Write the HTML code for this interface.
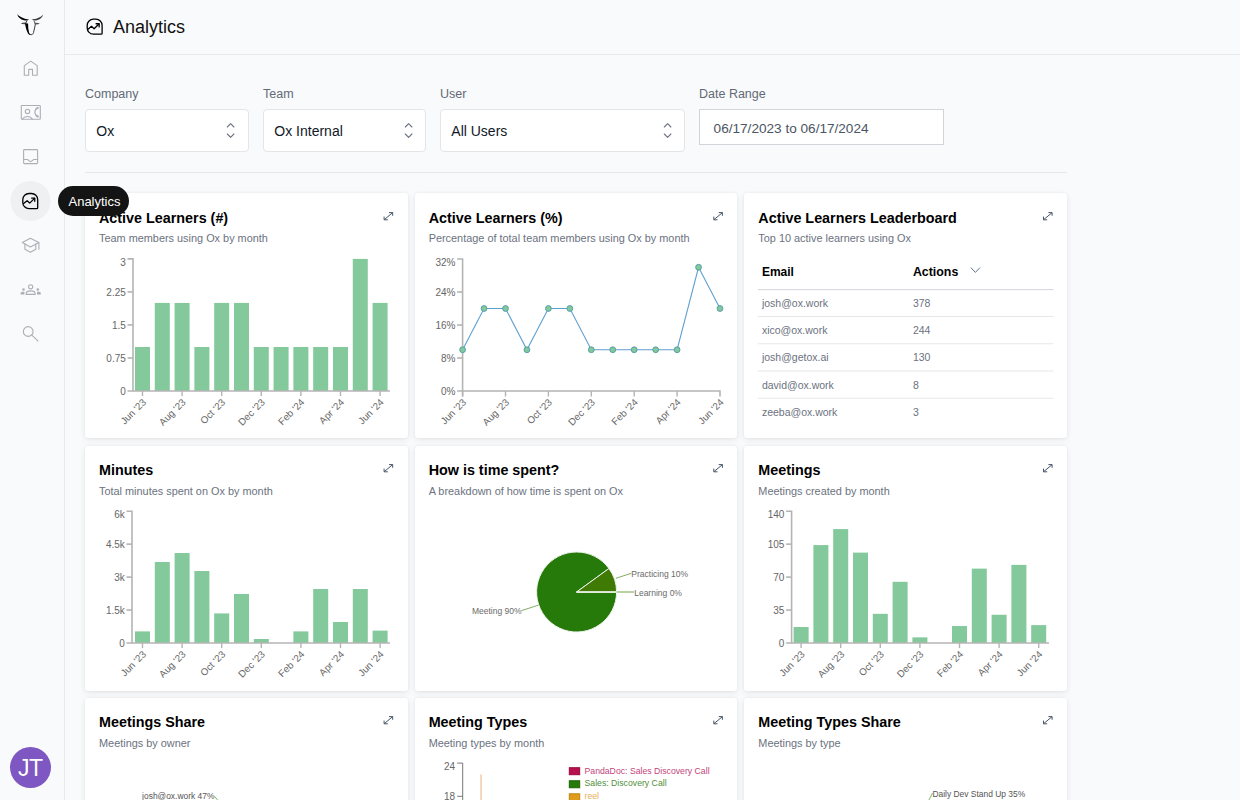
<!DOCTYPE html>
<html><head><meta charset="utf-8">
<style>
*{box-sizing:border-box;margin:0;padding:0}
html,body{width:1240px;height:800px;overflow:hidden;background:#f9fafb;font-family:"Liberation Sans",sans-serif;color:#111827}
.abs{position:absolute}
#sidebar{position:absolute;left:0;top:0;width:65px;height:800px;border-right:1px solid #e8e9ec;background:#f9fafb}
#header{position:absolute;left:65px;top:0;width:1175px;height:55px;border-bottom:1px solid #e8e9ec}
.lbl{position:absolute;top:86.5px;font-size:12.5px;color:#626a77;line-height:14px}
.sel{position:absolute;top:109px;height:43px;background:#fff;border:1px solid #e3e5e8;border-radius:4px;font-size:14px;color:#111827}
.sel span{position:absolute;left:10.3px;top:13px;line-height:16px}
.sel svg{position:absolute;right:12px;top:13px}
.card{position:absolute;width:322.67px;height:245.2px;background:#fff;border-radius:3px;box-shadow:0 2px 6px rgba(0,0,0,.07),0 0 3px rgba(0,0,0,.06)}
.card h3{position:absolute;left:14px;top:16.3px;font-size:14.35px;font-weight:bold;color:#000;line-height:16px;white-space:nowrap}
.card p{position:absolute;left:14px;top:39px;font-size:10.9px;color:#6b7280;line-height:13px;white-space:nowrap}
.card .ex{position:absolute;right:13px;top:16px}
</style></head>
<body>
<div id="sidebar">
<svg width="64" height="800" style="position:absolute;left:0;top:0" fill="none">
 <!-- bull logo -->
 <g fill="#000">
  <path d="M17.2 14.0 C17.9 17.4 21.2 20.1 25.4 20.5 C26.8 20.6 28.1 20.3 29 19.6 C27 19.4 24.6 19.0 22.6 17.8 C20.2 16.8 18.3 15.6 17.2 14.0 Z"/>
  <path d="M43.1 14.5 C42.5 17.6 39.6 20 35.6 20.4 C34.1 20.5 32.4 20.2 31.4 19.6 C33.5 19.3 35.9 19 37.9 18 C40.4 17 42.2 15.9 43.1 14.5 Z" fill="#3c3c3c"/>
  <path d="M20.8 23.6 C22.4 22.6 24.4 22.3 26.2 22.8 L26.2 24.2 C24.3 24.5 22.4 24.4 20.8 23.6 Z" fill="#4a4a4a"/>
  <path d="M39.9 23.7 C38.3 22.8 36.3 22.5 34.5 22.9 L34.3 24.3 C36.3 24.6 38.3 24.4 39.9 23.7 Z" fill="#555"/>
  <path d="M26.6 20.4 L25.4 22.6 L26.3 23 L27.6 20.5 Z" fill="#333"/>
  <path d="M34.2 20.5 L35.4 22.8 L34.5 23.1 L33.3 20.5 Z" fill="#444"/>
  <path d="M25.0 23.3 C25.6 27.5 26.6 31 28 33.4 C28.8 34.7 30 35.1 31 35.1 L30.7 34.2 C29.8 34 29.3 33.3 29 32.3 C28.3 29.6 28 26.6 28.1 23.6 Z"/>
  <path d="M30.8 34.65 C32.4 34.7 33.2 34 33.5 32.7 L35.4 24.2" fill="none" stroke="#333" stroke-width="0.95"/>
 </g>
 <g stroke="#abafb6" stroke-width="1.1" stroke-linejoin="round" stroke-linecap="round">
  <!-- home -->
  <path d="M24.3 75.3 V65.6 L30.75 61.1 L37.2 65.6 V75.3 H32.5 V69.4 H28.7 V75.3 Z"/>
  <!-- contact -->
  <rect x="21.3" y="105.5" width="19" height="13.8" rx="0.6"/>
  <circle cx="27.5" cy="111.4" r="2.2"/>
  <path d="M22.4 119.2 C23.6 117.4 25.4 116.5 27.5 116.5 C29.6 116.5 31.4 117.4 32.4 119.2"/>
  <path d="M37.3 108.3 C35.6 109.4 34.8 110.8 34.8 112.2 C34.8 113.6 35.6 115 37.3 116" stroke-width="1.2"/><path d="M36.4 108.6 L38 107.8" stroke-width="1.8"/><path d="M36.4 115.8 L38 116.6" stroke-width="1.8"/>
  <!-- inbox -->
  <rect x="23.6" y="149.6" width="14" height="14" rx="0.8"/>
  <path d="M23.6 159.5 H27.4 C28.4 159.5 29 161.5 30.6 161.5 C32.2 161.5 32.8 159.5 33.8 159.5 H37.6"/>
  <!-- grad cap -->
  <path d="M22.3 242.6 L30.4 238.3 L38.8 242.6 L30.4 247 Z"/>
  <path d="M24.9 244 V249.2 L30.4 252.2 L35.8 249.2 V244"/>
  <path d="M38.9 242.8 V249.2"/>
  <!-- search -->
  <circle cx="28.2" cy="331.5" r="4.9"/>
  <path d="M31.8 335.2 L37.9 340.8"/>
  <!-- team -->
  <circle cx="30.65" cy="286.8" r="2.1"/>
  <path d="M26.2 294.4 V293.6 C26.2 291.9 28.2 290.9 30.65 290.9 C33.1 290.9 35.1 291.9 35.1 293.6 V294.4 Z"/>
 </g>
 <g fill="#abafb6">
  <circle cx="23.5" cy="289.5" r="1.3"/>
  <circle cx="37.8" cy="289.5" r="1.3"/>
  <path d="M20.6 294.6 V293.4 C20.6 292.2 21.8 291.8 23.6 291.8 C24 291.8 24.2 291.8 24.4 291.9 V294.6 Z"/>
  <path d="M40.8 294.6 V293.4 C40.8 292.2 39.6 291.8 37.8 291.8 C37.4 291.8 37.2 291.8 37 291.9 V294.6 Z"/>
 </g>
 <!-- active analytics -->
 <circle cx="30.5" cy="201" r="20" fill="#eff0f2"/>
 <g stroke="#000" stroke-width="1.3" stroke-linejoin="round" stroke-linecap="round" transform="translate(21.6,192.4)">
  <path d="M1.2 7.3 A6.2 6.2 0 0 1 7.4 1.1 H9.9 A6.2 6.2 0 0 1 16.1 7.3 V15.3 Q16.1 16.2 15.2 16.2 H7.4 A6.2 6.2 0 0 1 1.2 10 Z"/>
  <path d="M2 11.2 L5.5 8.35 L8.1 10.7 L12.9 6"/>
  <path d="M10.1 5.75 H13.15 V8.9"/>
 </g>
</svg>
<div style="position:absolute;left:10.1px;top:747.1px;width:41px;height:41px;border-radius:50%;background:#7e57c2;color:#fff;font-size:23px;letter-spacing:-0.6px;text-indent:-0.6px;line-height:42.3px;text-align:center">JT</div>
</div>
<div style="position:absolute;left:58px;top:186px;width:71px;height:30px;border-radius:15px;background:#141414;color:#fff;font-size:13px;line-height:30px;text-align:center;z-index:10"><span style="position:relative;left:1px;top:1.3px">Analytics</span></div>
<div id="header">
  <svg width="20" height="20" style="position:absolute;left:21px;top:17.9px;overflow:visible" fill="none"><g stroke="#000" stroke-width="1.3" stroke-linejoin="round" stroke-linecap="round">
  <path d="M1.2 7.3 A6.2 6.2 0 0 1 7.4 1.1 H9.9 A6.2 6.2 0 0 1 16.1 7.3 V15.3 Q16.1 16.2 15.2 16.2 H7.4 A6.2 6.2 0 0 1 1.2 10 Z"/>
  <path d="M2 11.2 L5.5 8.35 L8.1 10.7 L12.9 6"/>
  <path d="M10.1 5.75 H13.15 V8.9"/></g></svg>
  <div class="abs" style="left:48px;top:17px;font-size:18px;line-height:20px;color:#111">Analytics</div>
</div>

<div class="lbl" style="left:85px">Company</div>
<div class="lbl" style="left:263px">Team</div>
<div class="lbl" style="left:440px">User</div>
<div class="lbl" style="left:699px">Date Range</div>

<div class="sel" style="left:85px;width:164px"><span>Ox</span></div>
<div class="sel" style="left:263px;width:163px"><span>Ox Internal</span></div>
<div class="sel" style="left:440px;width:245px"><span>All Users</span></div>
<div class="abs" style="left:699px;top:109px;width:245px;height:36px;background:#fff;border:1px solid #d1d5db;font-size:13.6px;color:#4b5563"><span class="abs" style="left:13.6px;top:10.5px;line-height:15px">06/17/2023 to 06/17/2024</span></div>

<div class="abs" style="left:85px;top:172px;width:982px;height:1px;background:#e5e7eb"></div>

<div class="card" style="left:85px;top:193.3px"><h3>Active Learners (#)</h3><p>Team members using Ox by month</p></div>
<div class="card" style="left:414.67px;top:193.3px"><h3>Active Learners (%)</h3><p>Percentage of total team members using Ox by month</p></div>
<div class="card" style="left:744.33px;top:193.3px"><h3>Active Learners Leaderboard</h3><p>Top 10 active learners using Ox</p></div>
<div class="card" style="left:85px;top:445.5px"><h3>Minutes</h3><p>Total minutes spent on Ox by month</p></div>
<div class="card" style="left:414.67px;top:445.5px"><h3>How is time spent?</h3><p>A breakdown of how time is spent on Ox</p></div>
<div class="card" style="left:744.33px;top:445.5px"><h3>Meetings</h3><p>Meetings created by month</p></div>
<div class="card" style="left:85px;top:697.7px"><h3>Meetings Share</h3><p>Meetings by owner</p></div>
<div class="card" style="left:414.67px;top:697.7px"><h3>Meeting Types</h3><p>Meeting types by month</p></div>
<div class="card" style="left:744.33px;top:697.7px"><h3>Meeting Types Share</h3><p>Meetings by type</p></div>

<svg width="1240" height="800" style="position:absolute;left:0;top:0;z-index:5;pointer-events:none" font-family="Liberation Sans, sans-serif">
<rect x="134.98" y="346.97" width="15.00" height="44.03" fill="#84c99b"/>
<rect x="154.78" y="302.93" width="15.00" height="88.07" fill="#84c99b"/>
<rect x="174.58" y="302.93" width="15.00" height="88.07" fill="#84c99b"/>
<rect x="194.38" y="346.97" width="15.00" height="44.03" fill="#84c99b"/>
<rect x="214.18" y="302.93" width="15.00" height="88.07" fill="#84c99b"/>
<rect x="233.98" y="302.93" width="15.00" height="88.07" fill="#84c99b"/>
<rect x="253.78" y="346.97" width="15.00" height="44.03" fill="#84c99b"/>
<rect x="273.58" y="346.97" width="15.00" height="44.03" fill="#84c99b"/>
<rect x="293.38" y="346.97" width="15.00" height="44.03" fill="#84c99b"/>
<rect x="313.18" y="346.97" width="15.00" height="44.03" fill="#84c99b"/>
<rect x="332.98" y="346.97" width="15.00" height="44.03" fill="#84c99b"/>
<rect x="352.78" y="258.90" width="15.00" height="132.10" fill="#84c99b"/>
<rect x="372.58" y="302.93" width="15.00" height="88.07" fill="#84c99b"/>
<path d="M127.50,258.90 H133.00 V391.00 H127.50" stroke="#b4b4b4" stroke-width="1.6" fill="none"/>
<path d="M127.50,357.98 H133.00" stroke="#b4b4b4" stroke-width="1.6"/>
<path d="M127.50,324.95 H133.00" stroke="#b4b4b4" stroke-width="1.6"/>
<path d="M127.50,291.92 H133.00" stroke="#b4b4b4" stroke-width="1.6"/>
<text x="125.80" y="395.20" text-anchor="end" font-size="10" fill="#666666">0</text>
<text x="125.80" y="362.18" text-anchor="end" font-size="10" fill="#666666">0.75</text>
<text x="125.80" y="329.15" text-anchor="end" font-size="10" fill="#666666">1.5</text>
<text x="125.80" y="296.12" text-anchor="end" font-size="10" fill="#666666">2.25</text>
<text x="125.80" y="266.10" text-anchor="end" font-size="10" fill="#666666">3</text>
<path d="M133.00,391.00 H390.00" stroke="#b4b4b4" stroke-width="1.6" fill="none"/>
<path d="M142.48,391.00 V396.00" stroke="#b4b4b4" stroke-width="1.4"/>
<path d="M182.08,391.00 V396.00" stroke="#b4b4b4" stroke-width="1.4"/>
<path d="M221.68,391.00 V396.00" stroke="#b4b4b4" stroke-width="1.4"/>
<path d="M261.28,391.00 V396.00" stroke="#b4b4b4" stroke-width="1.4"/>
<path d="M300.88,391.00 V396.00" stroke="#b4b4b4" stroke-width="1.4"/>
<path d="M340.48,391.00 V396.00" stroke="#b4b4b4" stroke-width="1.4"/>
<path d="M380.08,391.00 V396.00" stroke="#b4b4b4" stroke-width="1.4"/>
<text transform="translate(146.78,402.90) rotate(-45)" text-anchor="end" font-size="9.8" fill="#666666">Jun '23</text>
<text transform="translate(186.38,402.90) rotate(-45)" text-anchor="end" font-size="9.8" fill="#666666">Aug '23</text>
<text transform="translate(225.98,402.90) rotate(-45)" text-anchor="end" font-size="9.8" fill="#666666">Oct '23</text>
<text transform="translate(265.58,402.90) rotate(-45)" text-anchor="end" font-size="9.8" fill="#666666">Dec '23</text>
<text transform="translate(305.18,402.90) rotate(-45)" text-anchor="end" font-size="9.8" fill="#666666">Feb '24</text>
<text transform="translate(344.78,402.90) rotate(-45)" text-anchor="end" font-size="9.8" fill="#666666">Apr '24</text>
<text transform="translate(384.38,402.90) rotate(-45)" text-anchor="end" font-size="9.8" fill="#666666">Jun '24</text>
<rect x="135.00" y="631.40" width="15.00" height="11.60" fill="#84c99b"/>
<rect x="154.80" y="562.01" width="15.00" height="80.99" fill="#84c99b"/>
<rect x="174.60" y="553.02" width="15.00" height="89.98" fill="#84c99b"/>
<rect x="194.40" y="570.99" width="15.00" height="72.01" fill="#84c99b"/>
<rect x="214.20" y="613.41" width="15.00" height="29.59" fill="#84c99b"/>
<rect x="234.00" y="594.01" width="15.00" height="48.99" fill="#84c99b"/>
<rect x="253.80" y="639.00" width="15.00" height="4.00" fill="#84c99b"/>
<rect x="293.40" y="631.40" width="15.00" height="11.60" fill="#84c99b"/>
<rect x="313.20" y="589.01" width="15.00" height="53.99" fill="#84c99b"/>
<rect x="333.00" y="622.00" width="15.00" height="21.00" fill="#84c99b"/>
<rect x="352.80" y="589.01" width="15.00" height="53.99" fill="#84c99b"/>
<rect x="372.60" y="630.61" width="15.00" height="12.39" fill="#84c99b"/>
<path d="M126.50,511.20 H132.00 V643.00 H126.50" stroke="#b4b4b4" stroke-width="1.6" fill="none"/>
<path d="M126.50,610.05 H132.00" stroke="#b4b4b4" stroke-width="1.6"/>
<path d="M126.50,577.10 H132.00" stroke="#b4b4b4" stroke-width="1.6"/>
<path d="M126.50,544.15 H132.00" stroke="#b4b4b4" stroke-width="1.6"/>
<text x="124.80" y="647.20" text-anchor="end" font-size="10" fill="#666666">0</text>
<text x="124.80" y="614.25" text-anchor="end" font-size="10" fill="#666666">1.5k</text>
<text x="124.80" y="581.30" text-anchor="end" font-size="10" fill="#666666">3k</text>
<text x="124.80" y="548.35" text-anchor="end" font-size="10" fill="#666666">4.5k</text>
<text x="124.80" y="518.40" text-anchor="end" font-size="10" fill="#666666">6k</text>
<path d="M132.00,643.00 H390.00" stroke="#b4b4b4" stroke-width="1.6" fill="none"/>
<path d="M142.50,643.00 V648.00" stroke="#b4b4b4" stroke-width="1.4"/>
<path d="M182.10,643.00 V648.00" stroke="#b4b4b4" stroke-width="1.4"/>
<path d="M221.70,643.00 V648.00" stroke="#b4b4b4" stroke-width="1.4"/>
<path d="M261.30,643.00 V648.00" stroke="#b4b4b4" stroke-width="1.4"/>
<path d="M300.90,643.00 V648.00" stroke="#b4b4b4" stroke-width="1.4"/>
<path d="M340.50,643.00 V648.00" stroke="#b4b4b4" stroke-width="1.4"/>
<path d="M380.10,643.00 V648.00" stroke="#b4b4b4" stroke-width="1.4"/>
<text transform="translate(146.80,654.90) rotate(-45)" text-anchor="end" font-size="9.8" fill="#666666">Jun '23</text>
<text transform="translate(186.40,654.90) rotate(-45)" text-anchor="end" font-size="9.8" fill="#666666">Aug '23</text>
<text transform="translate(226.00,654.90) rotate(-45)" text-anchor="end" font-size="9.8" fill="#666666">Oct '23</text>
<text transform="translate(265.60,654.90) rotate(-45)" text-anchor="end" font-size="9.8" fill="#666666">Dec '23</text>
<text transform="translate(305.20,654.90) rotate(-45)" text-anchor="end" font-size="9.8" fill="#666666">Feb '24</text>
<text transform="translate(344.80,654.90) rotate(-45)" text-anchor="end" font-size="9.8" fill="#666666">Apr '24</text>
<text transform="translate(384.40,654.90) rotate(-45)" text-anchor="end" font-size="9.8" fill="#666666">Jun '24</text>
<rect x="793.60" y="627.00" width="15.00" height="16.00" fill="#84c99b"/>
<rect x="813.40" y="545.09" width="15.00" height="97.91" fill="#84c99b"/>
<rect x="833.20" y="529.09" width="15.00" height="113.91" fill="#84c99b"/>
<rect x="853.00" y="552.62" width="15.00" height="90.38" fill="#84c99b"/>
<rect x="872.80" y="613.82" width="15.00" height="29.18" fill="#84c99b"/>
<rect x="892.60" y="581.81" width="15.00" height="61.19" fill="#84c99b"/>
<rect x="912.40" y="637.35" width="15.00" height="5.65" fill="#84c99b"/>
<rect x="952.00" y="626.05" width="15.00" height="16.95" fill="#84c99b"/>
<rect x="971.80" y="568.63" width="15.00" height="74.37" fill="#84c99b"/>
<rect x="991.60" y="614.76" width="15.00" height="28.24" fill="#84c99b"/>
<rect x="1011.40" y="564.86" width="15.00" height="78.14" fill="#84c99b"/>
<rect x="1031.20" y="625.11" width="15.00" height="17.89" fill="#84c99b"/>
<path d="M786.10,511.20 H791.60 V643.00 H786.10" stroke="#b4b4b4" stroke-width="1.6" fill="none"/>
<path d="M786.10,610.05 H791.60" stroke="#b4b4b4" stroke-width="1.6"/>
<path d="M786.10,577.10 H791.60" stroke="#b4b4b4" stroke-width="1.6"/>
<path d="M786.10,544.15 H791.60" stroke="#b4b4b4" stroke-width="1.6"/>
<text x="784.40" y="647.20" text-anchor="end" font-size="10" fill="#666666">0</text>
<text x="784.40" y="614.25" text-anchor="end" font-size="10" fill="#666666">35</text>
<text x="784.40" y="581.30" text-anchor="end" font-size="10" fill="#666666">70</text>
<text x="784.40" y="548.35" text-anchor="end" font-size="10" fill="#666666">105</text>
<text x="784.40" y="518.40" text-anchor="end" font-size="10" fill="#666666">140</text>
<path d="M791.60,643.00 H1049.00" stroke="#b4b4b4" stroke-width="1.6" fill="none"/>
<path d="M801.10,643.00 V648.00" stroke="#b4b4b4" stroke-width="1.4"/>
<path d="M840.70,643.00 V648.00" stroke="#b4b4b4" stroke-width="1.4"/>
<path d="M880.30,643.00 V648.00" stroke="#b4b4b4" stroke-width="1.4"/>
<path d="M919.90,643.00 V648.00" stroke="#b4b4b4" stroke-width="1.4"/>
<path d="M959.50,643.00 V648.00" stroke="#b4b4b4" stroke-width="1.4"/>
<path d="M999.10,643.00 V648.00" stroke="#b4b4b4" stroke-width="1.4"/>
<path d="M1038.70,643.00 V648.00" stroke="#b4b4b4" stroke-width="1.4"/>
<text transform="translate(805.40,654.90) rotate(-45)" text-anchor="end" font-size="9.8" fill="#666666">Jun '23</text>
<text transform="translate(845.00,654.90) rotate(-45)" text-anchor="end" font-size="9.8" fill="#666666">Aug '23</text>
<text transform="translate(884.60,654.90) rotate(-45)" text-anchor="end" font-size="9.8" fill="#666666">Oct '23</text>
<text transform="translate(924.20,654.90) rotate(-45)" text-anchor="end" font-size="9.8" fill="#666666">Dec '23</text>
<text transform="translate(963.80,654.90) rotate(-45)" text-anchor="end" font-size="9.8" fill="#666666">Feb '24</text>
<text transform="translate(1003.40,654.90) rotate(-45)" text-anchor="end" font-size="9.8" fill="#666666">Apr '24</text>
<text transform="translate(1043.00,654.90) rotate(-45)" text-anchor="end" font-size="9.8" fill="#666666">Jun '24</text>
<path d="M457.10,259 H462.6 V391 H457.10" stroke="#b4b4b4" stroke-width="1.6" fill="none"/>
<path d="M457.10,358.00 H462.6" stroke="#b4b4b4" stroke-width="1.6"/>
<path d="M457.10,325.00 H462.6" stroke="#b4b4b4" stroke-width="1.6"/>
<path d="M457.10,292.00 H462.6" stroke="#b4b4b4" stroke-width="1.6"/>
<text x="455.40" y="395.20" text-anchor="end" font-size="10" fill="#666666">0%</text>
<text x="455.40" y="362.20" text-anchor="end" font-size="10" fill="#666666">8%</text>
<text x="455.40" y="329.20" text-anchor="end" font-size="10" fill="#666666">16%</text>
<text x="455.40" y="296.20" text-anchor="end" font-size="10" fill="#666666">24%</text>
<text x="455.40" y="266.20" text-anchor="end" font-size="10" fill="#666666">32%</text>
<path d="M462.6,396.5 V391 H720 V396.5" stroke="#b4b4b4" stroke-width="1.6" fill="none"/>
<path d="M462.60,391 V396.5" stroke="#b4b4b4" stroke-width="1.4"/>
<path d="M505.50,391 V396.5" stroke="#b4b4b4" stroke-width="1.4"/>
<path d="M548.40,391 V396.5" stroke="#b4b4b4" stroke-width="1.4"/>
<path d="M591.30,391 V396.5" stroke="#b4b4b4" stroke-width="1.4"/>
<path d="M634.20,391 V396.5" stroke="#b4b4b4" stroke-width="1.4"/>
<path d="M677.10,391 V396.5" stroke="#b4b4b4" stroke-width="1.4"/>
<text transform="translate(466.90,402.90) rotate(-45)" text-anchor="end" font-size="9.8" fill="#666666">Jun '23</text>
<text transform="translate(509.80,402.90) rotate(-45)" text-anchor="end" font-size="9.8" fill="#666666">Aug '23</text>
<text transform="translate(552.70,402.90) rotate(-45)" text-anchor="end" font-size="9.8" fill="#666666">Oct '23</text>
<text transform="translate(595.60,402.90) rotate(-45)" text-anchor="end" font-size="9.8" fill="#666666">Dec '23</text>
<text transform="translate(638.50,402.90) rotate(-45)" text-anchor="end" font-size="9.8" fill="#666666">Feb '24</text>
<text transform="translate(681.40,402.90) rotate(-45)" text-anchor="end" font-size="9.8" fill="#666666">Apr '24</text>
<text transform="translate(724.30,402.90) rotate(-45)" text-anchor="end" font-size="9.8" fill="#666666">Jun '24</text>
<polyline points="462.60,349.75 484.05,308.50 505.50,308.50 526.95,349.75 548.40,308.50 569.85,308.50 591.30,349.75 612.75,349.75 634.20,349.75 655.65,349.75 677.10,349.75 698.55,267.25 720.00,308.50" fill="none" stroke="#5fa0d0" stroke-width="1.1"/>
<circle cx="462.60" cy="349.75" r="2.9" fill="#84c99b" stroke="#4d9aa8" stroke-width="0.9"/>
<circle cx="484.05" cy="308.50" r="2.9" fill="#84c99b" stroke="#4d9aa8" stroke-width="0.9"/>
<circle cx="505.50" cy="308.50" r="2.9" fill="#84c99b" stroke="#4d9aa8" stroke-width="0.9"/>
<circle cx="526.95" cy="349.75" r="2.9" fill="#84c99b" stroke="#4d9aa8" stroke-width="0.9"/>
<circle cx="548.40" cy="308.50" r="2.9" fill="#84c99b" stroke="#4d9aa8" stroke-width="0.9"/>
<circle cx="569.85" cy="308.50" r="2.9" fill="#84c99b" stroke="#4d9aa8" stroke-width="0.9"/>
<circle cx="591.30" cy="349.75" r="2.9" fill="#84c99b" stroke="#4d9aa8" stroke-width="0.9"/>
<circle cx="612.75" cy="349.75" r="2.9" fill="#84c99b" stroke="#4d9aa8" stroke-width="0.9"/>
<circle cx="634.20" cy="349.75" r="2.9" fill="#84c99b" stroke="#4d9aa8" stroke-width="0.9"/>
<circle cx="655.65" cy="349.75" r="2.9" fill="#84c99b" stroke="#4d9aa8" stroke-width="0.9"/>
<circle cx="677.10" cy="349.75" r="2.9" fill="#84c99b" stroke="#4d9aa8" stroke-width="0.9"/>
<circle cx="698.55" cy="267.25" r="2.9" fill="#84c99b" stroke="#4d9aa8" stroke-width="0.9"/>
<circle cx="720.00" cy="308.50" r="2.9" fill="#84c99b" stroke="#4d9aa8" stroke-width="0.9"/>
<g stroke="#475569" stroke-width="1" fill="none" stroke-linecap="butt" stroke-linejoin="miter"><path d="M384.20,219.70 L392.60,212.70"/><path d="M389.00,212.60 H392.70 V215.80"/><path d="M384.10,216.60 V219.80 H387.80"/></g>
<g stroke="#475569" stroke-width="1" fill="none" stroke-linecap="butt" stroke-linejoin="miter"><path d="M384.20,471.70 L392.60,464.70"/><path d="M389.00,464.60 H392.70 V467.80"/><path d="M384.10,468.60 V471.80 H387.80"/></g>
<g stroke="#475569" stroke-width="1" fill="none" stroke-linecap="butt" stroke-linejoin="miter"><path d="M384.20,723.70 L392.60,716.70"/><path d="M389.00,716.60 H392.70 V719.80"/><path d="M384.10,720.60 V723.80 H387.80"/></g>
<g stroke="#475569" stroke-width="1" fill="none" stroke-linecap="butt" stroke-linejoin="miter"><path d="M713.90,219.70 L722.30,212.70"/><path d="M718.70,212.60 H722.40 V215.80"/><path d="M713.80,216.60 V219.80 H717.50"/></g>
<g stroke="#475569" stroke-width="1" fill="none" stroke-linecap="butt" stroke-linejoin="miter"><path d="M713.90,471.70 L722.30,464.70"/><path d="M718.70,464.60 H722.40 V467.80"/><path d="M713.80,468.60 V471.80 H717.50"/></g>
<g stroke="#475569" stroke-width="1" fill="none" stroke-linecap="butt" stroke-linejoin="miter"><path d="M713.90,723.70 L722.30,716.70"/><path d="M718.70,716.60 H722.40 V719.80"/><path d="M713.80,720.60 V723.80 H717.50"/></g>
<g stroke="#475569" stroke-width="1" fill="none" stroke-linecap="butt" stroke-linejoin="miter"><path d="M1043.60,219.70 L1052.00,212.70"/><path d="M1048.40,212.60 H1052.10 V215.80"/><path d="M1043.50,216.60 V219.80 H1047.20"/></g>
<g stroke="#475569" stroke-width="1" fill="none" stroke-linecap="butt" stroke-linejoin="miter"><path d="M1043.60,471.70 L1052.00,464.70"/><path d="M1048.40,464.60 H1052.10 V467.80"/><path d="M1043.50,468.60 V471.80 H1047.20"/></g>
<g stroke="#475569" stroke-width="1" fill="none" stroke-linecap="butt" stroke-linejoin="miter"><path d="M1043.60,723.70 L1052.00,716.70"/><path d="M1048.40,716.60 H1052.10 V719.80"/><path d="M1043.50,720.60 V723.80 H1047.20"/></g>
<g stroke="#6b7280" stroke-width="1.1" fill="none" stroke-linecap="round" stroke-linejoin="round"><path d="M227.30,127 L230.60,123.7 L233.90,127"/><path d="M227.30,134 L230.60,137.3 L233.90,134"/></g>
<g stroke="#6b7280" stroke-width="1.1" fill="none" stroke-linecap="round" stroke-linejoin="round"><path d="M405.30,127 L408.60,123.7 L411.90,127"/><path d="M405.30,134 L408.60,137.3 L411.90,134"/></g>
<g stroke="#6b7280" stroke-width="1.1" fill="none" stroke-linecap="round" stroke-linejoin="round"><path d="M664.30,127 L667.60,123.7 L670.90,127"/><path d="M664.30,134 L667.60,137.3 L670.90,134"/></g>
<text x="761.9" y="276.2" font-size="12" font-weight="bold" fill="#000">Email</text>
<text x="912.9" y="276.1" font-size="12.4" font-weight="bold" fill="#000">Actions</text>
<path d="M970.8,267.6 L975.4,272.4 L980,267.6" stroke="#64748b" stroke-width="1" fill="none"/>
<rect x="757.9" y="289" width="295.5" height="1.2" fill="#d9dbe0"/>
<text x="761.9" y="306.80" font-size="10.5" fill="#6b7280">josh@ox.work</text>
<text x="912.9" y="306.80" font-size="10.5" fill="#6b7280">378</text>
<rect x="757.9" y="316.00" width="295.5" height="1" fill="#e5e7eb"/>
<text x="761.9" y="334.05" font-size="10.5" fill="#6b7280">xico@ox.work</text>
<text x="912.9" y="334.05" font-size="10.5" fill="#6b7280">244</text>
<rect x="757.9" y="343.25" width="295.5" height="1" fill="#e5e7eb"/>
<text x="761.9" y="361.30" font-size="10.5" fill="#6b7280">josh@getox.ai</text>
<text x="912.9" y="361.30" font-size="10.5" fill="#6b7280">130</text>
<rect x="757.9" y="370.50" width="295.5" height="1" fill="#e5e7eb"/>
<text x="761.9" y="388.55" font-size="10.5" fill="#6b7280">david@ox.work</text>
<text x="912.9" y="388.55" font-size="10.5" fill="#6b7280">8</text>
<rect x="757.9" y="397.75" width="295.5" height="1" fill="#e5e7eb"/>
<text x="761.9" y="415.80" font-size="10.5" fill="#6b7280">zeeba@ox.work</text>
<text x="912.9" y="415.80" font-size="10.5" fill="#6b7280">3</text>
<path d="M576.6,592 L616.60,592.00 A40,40 0 1 1 608.96,568.49 Z" fill="#267a0a" stroke="#eef3ea" stroke-width="1"/>
<path d="M576.6,592 L608.96,568.49 A40,40 0 0 1 616.60,592.00 Z" fill="#3f7a05" stroke="#eef3ea" stroke-width="1"/>
<path d="M576.6,592 L616.60,592.00" stroke="#eef3ea" stroke-width="1.3"/>
<g stroke="#82ad62" stroke-width="1" fill="none">
<path d="M615.8,578.3 L631.3,573.3"/>
<path d="M616.6,592 L634.2,592" stroke="#a6c283" stroke-width="1.5"/>
<path d="M538.4,605.2 L521.5,610.6"/>
</g>
<text x="631.3" y="577.4" font-size="8.5" fill="#6a6a6a">Practicing 10%</text>
<text x="634.2" y="595.9" font-size="8.5" fill="#6a6a6a">Learning 0%</text>
<text x="521.5" y="614.4" font-size="8.5" fill="#6a6a6a" text-anchor="end">Meeting 90%</text>
<text x="142.1" y="799.3" font-size="8.45" fill="#555">josh@ox.work 47%</text>
<path d="M214.3,796.2 L218.5,801" stroke="#7cb85a" stroke-width="1" fill="none"/>
<text x="932.4" y="796.6" font-size="8.45" fill="#555">Daily Dev Stand Up 35%</text>
<path d="M932.6,793 L928.4,801" stroke="#7cb85a" stroke-width="1" fill="none"/>
<path d="M457.2,763.1 H462.7 V805" stroke="#777" stroke-width="1" fill="none"/>
<path d="M457.2,796.3 H462.7" stroke="#777" stroke-width="1"/>
<text x="455" y="769.6" font-size="10" fill="#666" text-anchor="end">24</text>
<text x="455" y="800.1" font-size="10" fill="#666" text-anchor="end">18</text>
<rect x="480.3" y="774.4" width="1.5" height="30" fill="#f2cba6"/>
<rect x="569.3" y="767.70" width="10.4" height="7" fill="#b80f4e" stroke="#b80f4e" stroke-width="1" style="filter:brightness(0.85)"/>
<rect x="569.8" y="768.20" width="9.4" height="6" fill="#b80f4e"/>
<text x="584.5" y="773.70" font-size="8.7" fill="#c2457a">PandaDoc: Sales Discovery Call</text>
<rect x="569.3" y="780.75" width="10.4" height="7" fill="#267a0a" stroke="#267a0a" stroke-width="1" style="filter:brightness(0.85)"/>
<rect x="569.8" y="781.25" width="9.4" height="6" fill="#267a0a"/>
<text x="584.5" y="786.20" font-size="8.7" fill="#4f8f3a">Sales: Discovery Call</text>
<rect x="569.3" y="793.80" width="10.4" height="7" fill="#e09c1c" stroke="#e09c1c" stroke-width="1" style="filter:brightness(0.85)"/>
<rect x="569.8" y="794.30" width="9.4" height="6" fill="#e09c1c"/>
<text x="584.5" y="798.70" font-size="8.7" fill="#e8b05a">reel</text>
</svg>
</body></html>
